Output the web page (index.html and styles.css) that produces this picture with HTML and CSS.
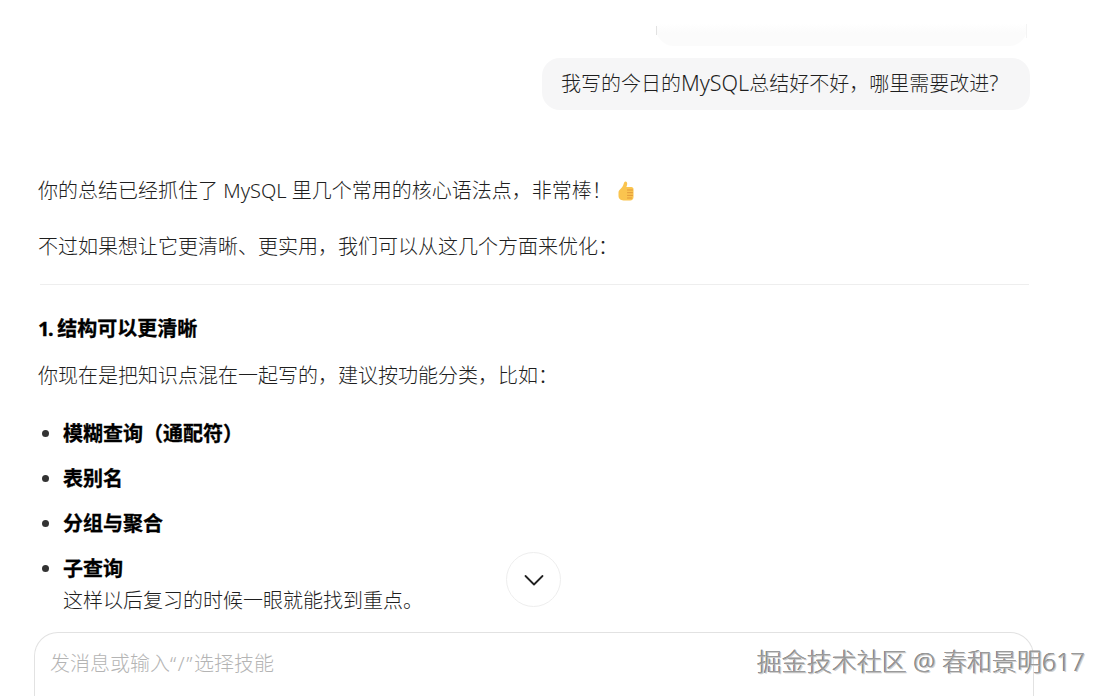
FILE: index.html
```html
<!DOCTYPE html>
<html lang="zh-CN">
<head>
<meta charset="utf-8">
<title>对话</title>
<link rel="stylesheet" href="styles.css">
</head>
<body>
<div class="page">
  <main class="chat">
    <div class="clipped-wrap"><div class="clipped-bubble"></div></div>
    <div class="user-row"><div class="user-bubble">我写的今日的<span class="latin-wide">MySQL</span>总结好不好，哪里需要改进<span class="latin-wide">?</span></div></div>
    <article class="answer">
      <p class="first">你的总结已经抓住了 MySQL 里几个常用的核心语法点，非常棒！<svg class="thumb" viewBox="0 0 16 20" aria-hidden="true"><path fill="#fac44f" d="M.5 11.500c0-1.200.7-2.300 1.700-3.200C4 6.800 5.200 5 5.700 2.800 6 1.500 6.500.5 7.500.5c1.200 0 1.800 1.200 1.700 2.500-.1 1.100-.4 2.100-.8 3.100h5c1.300 0 2.100 1 2.100 2.100v7.900c0 2-1.300 3.400-3.300 3.400H5.500C2.500 19.500.5 17.500.5 14.800z"/><path fill="none" stroke="#e2993a" stroke-width="1" stroke-linecap="round" d="M9.500 9h5M9.500 11.700h5M9.500 14.400h5M9.500 17h4"/></svg></p>
      <p class="second">不过如果想让它更清晰、更实用，我们可以从这几个方面来优化：</p>
      <hr class="rule">
      <h3 class="heading"><span class="heading-num">1.</span> 结构可以更清晰</h3>
      <p class="intro">你现在是把知识点混在一起写的，建议按功能分类，比如：</p>
      <ul class="points">
        <li><strong>模糊查询（通配符）</strong></li>
        <li><strong>表别名</strong></li>
        <li><strong>分组与聚合</strong></li>
        <li><strong>子查询</strong><br>这样以后复习的时候一眼就能找到重点。</li>
      </ul>
    </article>
  </main>
  <button class="scroll-down" aria-label="滚动到底部"><svg viewBox="0 0 24 24" width="24" height="24" aria-hidden="true"><path fill="none" stroke="#222" stroke-width="1.800" stroke-linecap="round" stroke-linejoin="round" d="M3.500 8 12 16.500 20.500 8"/></svg></button>
  <section class="composer"><span class="placeholder">发消息或输入<span class="quotes">“/”</span>选择技能</span></section>
  <div class="watermark">掘金技术社区 @ 春和景明617</div>
</div>
</body>
</html>
```

FILE: styles.css
```css
* { box-sizing: border-box; }
html, body { margin: 0; padding: 0; background: #fff; }
body {
  font-family: "Noto Sans", "Noto Sans CJK SC", sans-serif;
  font-size: 20px;
  color: #1e1e1e;
  font-weight: 300;
}
.page {
  position: relative;
  width: 1105px;
  height: 696px;
  overflow: hidden;
}
.chat {
  height: 632px;
  padding: 24px 75px 0 38px;
  overflow: hidden;
}
.clipped-wrap { display: flex; justify-content: flex-end; padding-right: 3px; }
.clipped-bubble {
  position: relative;
  width: 371px;
  height: 22px;
  background: linear-gradient(#ffffff, #fbfbfb 40%, #fbfbfb);
  border-radius: 0 0 18px 18px;
}
.clipped-bubble::before {
  content: "";
  position: absolute;
  left: 0;
  top: 2px;
  width: 1px;
  height: 9px;
  background: #e2e2e2;
}
.clipped-bubble::after {
  content: "";
  position: absolute;
  right: 0;
  top: 0;
  width: 1px;
  height: 14px;
  background: #f4f4f4;
}
.user-row { display: flex; justify-content: flex-end; margin-top: 12px; }
.user-bubble {
  width: 488px;
  height: 52px;
  padding: 0 19px;
  line-height: 50px;
  background: #f6f6f7;
  border-radius: 18px;
  white-space: nowrap;
}
.latin-wide { font-size: 21.5px; }
.answer { line-height: 32px; }
.answer p { margin: 0; }
.first { margin-top: 65px !important; display: flex; align-items: center; }
.thumb { width: 16px; height: 20px; margin-left: 6px; }
.second { margin-top: 24px !important; }
.rule { margin: 21px 1px 0 2px; border: 0; border-top: 1px solid #eeeeee; }
.heading { margin: 28px 0 0; font-size: 20px; line-height: 32px; font-weight: 700; color: #000; -webkit-text-stroke: 0.3px #000; }
.heading-num { letter-spacing: -1.5px; }
.intro { margin-top: 15px !important; }
.points { margin: 26px 0 0; padding: 0 0 0 25px; }
.points li { margin-bottom: 13px; }
.points li::marker { color: #333; }
.points strong { color: #000; font-weight: 700; -webkit-text-stroke: 0.3px #000; }
.scroll-down {
  position: absolute;
  left: 506px;
  top: 552px;
  width: 55px;
  height: 55px;
  padding: 0;
  display: flex;
  align-items: center;
  justify-content: center;
  background: #fff;
  border: 1px solid #eeeeee;
  border-radius: 50%;
}
.composer {
  margin-left: 34px;
  width: 1000px;
  height: 90px;
  padding: 15px 15px;
  border: 1px solid #e2e2e2;
  border-bottom: 0;
  border-radius: 24px 24px 0 0;
  line-height: 32px;
}
.placeholder { color: #b4b4b4; }
.quotes { letter-spacing: 1.5px; }
.watermark {
  position: absolute;
  right: 20px;
  top: 644px;
  font-size: 25px;
  line-height: 34px;
  font-weight: 300;
  color: #9a9a9a;
  white-space: nowrap;
  text-shadow: 1px 1px 0 #d0d0d0, -0.5px -0.5px 0 #666;
}
```
